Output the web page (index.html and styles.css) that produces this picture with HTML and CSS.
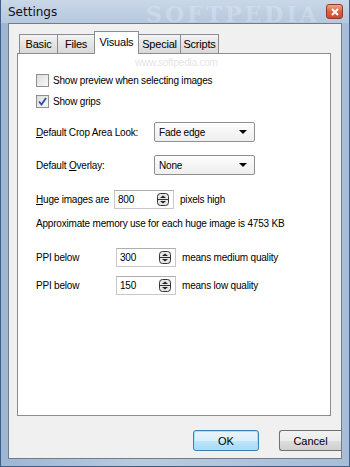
FILE: index.html
```html
<!DOCTYPE html>
<html lang="en">
<head>
    <meta charset="UTF-8">
    <title>Settings</title>
    <link rel="stylesheet" href="styles.css">
</head>
<body>
<div class="window">
    <div class="titlebar">
        <span class="title">Settings</span>
        <span class="watermark">SOFTPEDIA</span>
        <span class="close">
            <svg width="8" height="8" viewBox="0 0 8 8"><path d="M1 1 L7 7 M7 1 L1 7" stroke="#fff" stroke-width="2"/></svg>
        </span>
    </div>
    <div class="client">
        <div class="tabs">
            <div class="tab tab-basic">Basic</div>
            <div class="tab tab-files">Files</div>
            <div class="tab tab-visuals active">Visuals</div>
            <div class="tab tab-special">Special</div>
            <div class="tab tab-scripts">Scripts</div>
        </div>
        <div class="panel">
            <span class="site">www.softpedia.com</span>
            <div class="check-row first">
                <span class="checkbox"></span>
                <span>Show preview when selecting images</span>
            </div>
            <div class="check-row second">
                <span class="checkbox">
                    <svg width="9" height="9" viewBox="0 0 9 9"><path d="M1 4.5 L3.5 7.5 L8 1" stroke="#2a4fa8" stroke-width="1.8" fill="none"/></svg>
                </span>
                <span>Show grips</span>
            </div>
            <div class="row combo-row crop">
                <span class="label-wide"><u>D</u>efault Crop Area Look:</span>
                <div class="combo"><span>Fade edge</span><span class="arrow"></span></div>
            </div>
            <div class="row combo-row overlay">
                <span class="label-wide">Default <u>O</u>verlay:</span>
                <div class="combo"><span>None</span><span class="arrow"></span></div>
            </div>
            <div class="row spin-row huge">
                <span class="label-huge"><u>H</u>uge images are</span>
                <div class="spin">
                    <span>800</span>
                    <svg class="spin-btn" width="12" height="13" viewBox="0 0 12 13"><rect x="0.5" y="0.5" width="11" height="12" rx="3" fill="#e6e6e6" stroke="#333"/><path d="M1 6.5 H11" stroke="#333"/><path d="M3 5 L6 2.5 L9 5 Z" fill="#222"/><path d="M3 8 L6 10.5 L9 8 Z" fill="#222"/></svg>
                </div>
                <span>pixels high</span>
            </div>
            <div class="memo">Approximate memory use for each huge image is 4753 KB</div>
            <div class="row spin-row ppi1">
                <span class="label-ppi">PPI below</span>
                <div class="spin">
                    <span>300</span>
                    <svg class="spin-btn" width="12" height="13" viewBox="0 0 12 13"><rect x="0.5" y="0.5" width="11" height="12" rx="3" fill="#e6e6e6" stroke="#333"/><path d="M1 6.5 H11" stroke="#333"/><path d="M3 5 L6 2.5 L9 5 Z" fill="#222"/><path d="M3 8 L6 10.5 L9 8 Z" fill="#222"/></svg>
                </div>
                <span>means medium quality</span>
            </div>
            <div class="row spin-row ppi2">
                <span class="label-ppi">PPI below</span>
                <div class="spin">
                    <span>150</span>
                    <svg class="spin-btn" width="12" height="13" viewBox="0 0 12 13"><rect x="0.5" y="0.5" width="11" height="12" rx="3" fill="#e6e6e6" stroke="#333"/><path d="M1 6.5 H11" stroke="#333"/><path d="M3 5 L6 2.5 L9 5 Z" fill="#222"/><path d="M3 8 L6 10.5 L9 8 Z" fill="#222"/></svg>
                </div>
                <span>means low quality</span>
            </div>
        </div>
        <div class="buttons">
            <button class="btn ok">OK</button>
            <button class="btn cancel">Cancel</button>
        </div>
    </div>
</div>
</body>
</html>
```
FILE: styles.css
```css
body {
    margin: 0;
    padding: 0;
    font-family: "Liberation Sans", Arial, sans-serif;
    font-size: 10px;
    letter-spacing: -0.2px;
    color: #000;
    background: #2c4a70;
}

.window {
    width: 350px;
    height: 467px;
    box-sizing: border-box;
    padding: 0 7px 7px 7px;
    background: linear-gradient(to right, #9fb6d3, #b9cbe0 40%, #a9bdd7);
    border-left: 1px solid #3d5f8c;
    border-right: 1px solid #3d5f8c;
    border-bottom: 1px solid #3d5f8c;
    display: flex;
    flex-direction: column;
}

.titlebar {
    height: 23px;
    position: relative;
    display: flex;
    align-items: center;
    background: linear-gradient(to bottom, #c9d7e8, #b6c8de);
    margin: 0 -7px;
    padding: 0 7px 0 7px;
}

.title {
    font-family: "DejaVu Sans", sans-serif;
    font-size: 12px;
    letter-spacing: 0;
    color: #111;
}

.watermark {
    position: absolute;
    left: 145px;
    top: 1px;
    font-family: "DejaVu Serif", serif;
    font-size: 22px;
    font-weight: bold;
    letter-spacing: 3px;
    color: rgba(255, 255, 255, 0.22);
}

.close {
    position: absolute;
    right: 6px;
    top: 4px;
    width: 15px;
    height: 13px;
    border: 1px solid #8a3b2a;
    border-radius: 3px;
    background: linear-gradient(to bottom, #f0a58c, #e0603f 50%, #cc4a2c);
    display: flex;
    align-items: center;
    justify-content: center;
}

.client {
    flex: 1;
    background: #f0f0f0;
    border: 1px solid #6f7c8c;
    display: flex;
    flex-direction: column;
    padding: 7px 10px 0 8px;
}

.tabs {
    display: flex;
    align-items: flex-end;
    height: 22px;
    padding-left: 2px;
    position: relative;
    z-index: 1;
}

.tab {
    height: 19px;
    box-sizing: border-box;
    border: 1px solid #898c95;
    border-bottom: none;
    margin-right: -1px;
    display: flex;
    align-items: center;
    justify-content: center;
    font-size: 11px;
    letter-spacing: -0.2px;
    background: linear-gradient(to bottom, #f4f4f4, #e4e4e4 50%, #d8d8d8);
}

.tab-basic {
    width: 39px;
}

.tab-files {
    width: 38px;
}

.tab-visuals {
    width: 45px;
}

.tab-special {
    width: 43px;
}

.tab-scripts {
    width: 39px;
}

.tab.active {
    background: #fff;
    padding-bottom: 3px;
    margin-bottom: -1px;
    height: 23px;
}

.panel {
    height: 363px;
    box-sizing: border-box;
    background: #fff;
    border: 1px solid #898c95;
    padding: 0 0 0 18px;
    position: relative;
}

.site {
    position: absolute;
    left: 117px;
    top: 3px;
    font-size: 10px;
    color: #e6e6e6;
}

.row, .check-row {
    display: flex;
    align-items: center;
}

.check-row {
    height: 14px;
}

.first {
    margin-top: 19px;
}

.second {
    margin-top: 7px;
}

.checkbox {
    width: 11px;
    height: 11px;
    border: 1px solid #8f8f8f;
    background: linear-gradient(135deg, #dcdcdc, #fafafa);
    margin-right: 4px;
    display: flex;
    align-items: center;
    justify-content: center;
}

.combo-row {
    height: 20px;
}

.crop {
    margin-top: 14px;
}

.overlay {
    margin-top: 13px;
}

.label-wide {
    width: 118px;
}

.combo {
    width: 101px;
    height: 20px;
    box-sizing: border-box;
    border: 1px solid #8e8f8f;
    border-radius: 2px;
    background: linear-gradient(to bottom, #fdfdfd, #eeeeee);
    display: flex;
    align-items: center;
    justify-content: space-between;
    padding: 0 7px 0 4px;
}

.arrow {
    width: 0;
    height: 0;
    border-left: 4px solid transparent;
    border-right: 4px solid transparent;
    border-top: 4px solid #000;
}

.spin-row {
    height: 19px;
}

.huge {
    margin-top: 15px;
}

.ppi1 {
    margin-top: 17px;
}

.ppi2 {
    margin-top: 9px;
}

.label-huge {
    width: 78px;
}

.label-ppi {
    width: 80px;
}

.spin {
    width: 60px;
    height: 19px;
    box-sizing: border-box;
    border: 1px solid #c6c8cc;
    border-top-color: #abadb3;
    background: #fff;
    display: flex;
    align-items: center;
    justify-content: space-between;
    padding: 0 4px 0 3px;
    margin-right: 6px;
}

.memo {
    margin-top: 8px;
    height: 14px;
    line-height: 14px;
}

.buttons {
    display: flex;
    justify-content: flex-end;
    margin-top: 14px;
    gap: 20px;
    margin-right: -10px;
}

.btn {
    height: 21px;
    font-family: "Liberation Sans", Arial, sans-serif;
    font-size: 11px;
    color: #000;
    padding: 0;
}

.ok {
    width: 66px;
    border: 1px solid #3c7fb1;
    border-radius: 3px;
    background: linear-gradient(to bottom, #e8f5fc, #d9effa 50%, #bee6fd 51%, #a7d9f5);
    box-shadow: inset 0 0 0 1px #a6e1fb;
}

.cancel {
    width: 62px;
    border: 1px solid #707070;
    border-right: none;
    border-radius: 3px 0 0 3px;
    background: linear-gradient(to bottom, #f2f2f2, #ebebeb 50%, #dddddd 51%, #cfcfcf);
}
```
